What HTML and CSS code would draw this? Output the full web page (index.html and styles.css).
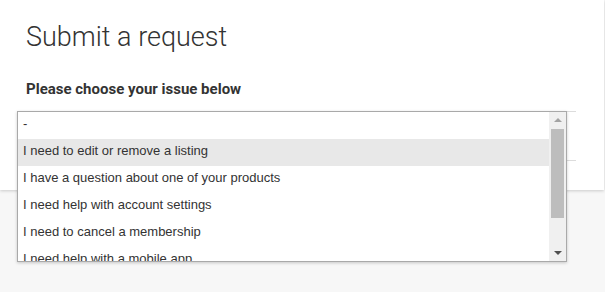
FILE: index.html
```html
<!DOCTYPE html>
<html>
<head>
<meta charset="utf-8">
<link rel="stylesheet" href="styles.css">
</head>
<body>
<div class="card">
  <h1 class="title">Submit a request</h1>
  <div class="label">Please choose your issue below</div>
  <div class="field">
    <div class="field-line"></div>
    <div class="field-line second"></div>
  </div>
</div>
<div class="dropdown">
  <ul class="options">
    <li class="opt">-</li>
    <li class="opt hover">I need to edit or remove a listing</li>
    <li class="opt">I have a question about one of your products</li>
    <li class="opt">I need help with account settings</li>
    <li class="opt">I need to cancel a membership</li>
    <li class="opt">I need help with a mobile app</li>
  </ul>
  <div class="scrollbar">
    <div class="arrow up"></div>
    <div class="thumb"></div>
    <div class="arrow down"></div>
  </div>
</div>
</body>
</html>
```
FILE: styles.css
```css
html, body {
  margin: 0;
  padding: 0;
}
body {
  background: #f7f7f7;
  width: 605px;
  height: 292px;
  overflow: hidden;
  position: relative;
}
.card {
  background: #fff;
  height: 190px;
  width: 604px;
  box-shadow: 0 1px 3px rgba(0,0,0,0.18);
  padding: 20px 0 0 26px;
  box-sizing: border-box;
}
.title {
  margin: 0;
  font-family: Roboto, "Liberation Sans", sans-serif;
  font-weight: 300;
  font-size: 27px;
  line-height: 35px;
  color: #333;
}
.label {
  margin-top: 25px;
  font-family: Roboto, "Liberation Sans", sans-serif;
  font-weight: 700;
  font-size: 15px;
  line-height: 18px;
  color: #333;
}
.field {
  margin-top: 13px;
  width: 550px;
}
.field-line {
  height: 1px;
  background: #dcdcdc;
}
.field-line.second {
  margin-top: 48px;
}
.dropdown {
  position: absolute;
  left: 17px;
  top: 111px;
  width: 550px;
  height: 151px;
  box-sizing: border-box;
  border: 1px solid #a9a9a9;
  background: #fff;
  box-shadow: 0 1px 3px rgba(0,0,0,0.2);
  display: flex;
  overflow: hidden;
}
.options {
  list-style: none;
  margin: 0;
  padding: 0;
  flex: 1;
  overflow: hidden;
}
.opt {
  font-family: "Liberation Sans", Arial, sans-serif;
  font-size: 13px;
  line-height: 23px;
  padding: 0 0 4px 5px;
  color: #333;
  white-space: nowrap;
}
.opt.hover {
  background: #e8e8e8;
}
.scrollbar {
  width: 17px;
  background: #f0f0f0;
  position: relative;
  flex: none;
}
.thumb {
  position: absolute;
  left: 2px;
  top: 17px;
  width: 13px;
  height: 89px;
  background: #bdbdbd;
}
.arrow {
  position: absolute;
  left: 5px;
  width: 0;
  height: 0;
  border-left: 4px solid transparent;
  border-right: 4px solid transparent;
}
.arrow.up {
  top: 6px;
  border-bottom: 4px solid #a3a3a3;
}
.arrow.down {
  top: 139px;
  border-top: 4px solid #505050;
}
```
